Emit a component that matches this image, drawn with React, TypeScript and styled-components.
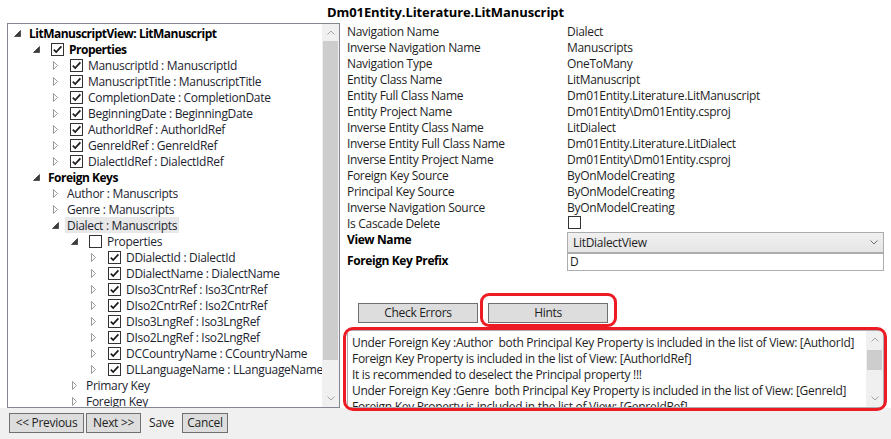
import React from 'react';
import styled, { createGlobalStyle } from 'styled-components';

const FONT = `"Open Sans", "Noto Sans", "Liberation Sans", sans-serif`;

const GlobalStyle = createGlobalStyle`
  html, body { margin: 0; padding: 0; }
  body {
    font-family: ${FONT};
    font-size: 12px;
    letter-spacing: -0.3px;
    color: #1e1e1e;
    background: #f0f0f0;
  }
  * { box-sizing: border-box; }
`;

const Window = styled.div`
  width: 891px;
  height: 439px;
  display: flex;
  flex-direction: column;
`;

const Main = styled.div`
  height: 408px;
  background: #fff;
  display: flex;
  flex-direction: column;
`;

const Title = styled.div`
  height: 23px;
  padding-top: 2px;
  line-height: 21px;
  text-align: center;
  font-weight: 700;
  font-size: 13px;
  letter-spacing: -0.1px;
  color: #000;
`;

const Body = styled.div`
  height: 385px;
  display: flex;
`;

/* ---------- tree ---------- */

const TreeBox = styled.div`
  width: 333px;
  height: 385px;
  margin-left: 7px;
  border: 1px solid #828790;
  display: flex;
  background: #fff;
  flex: none;
`;

const TreeContent = styled.div`
  flex: 1;
  min-width: 0;
  overflow: hidden;
  padding-top: 1px;
`;

const TreeRow = styled.div<{ $level: number }>`
  display: flex;
  align-items: center;
  height: 16px;
  padding-left: ${(p) => p.$level * 19}px;
  white-space: nowrap;
`;

const Expander = styled.span`
  width: 19px;
  height: 16px;
  flex: none;
  display: flex;
  align-items: center;
  justify-content: center;
`;

const Header = styled.span<{ $selected?: boolean; $bold?: boolean }>`
  flex: none;
  display: flex;
  align-items: center;
  height: 16px;
  padding: 0 2px;
  background: ${(p) => (p.$selected ? '#e8e8e8' : 'transparent')};
  font-weight: ${(p) => (p.$bold ? 700 : 400)};
  letter-spacing: ${(p) => (p.$bold ? '-0.5px' : '-0.3px')};
  color: ${(p) => (p.$bold ? '#000' : '#1c2430')};
`;

const CheckBoxBox = styled.span<{ $gapLeft: number }>`
  width: 13px;
  height: 13px;
  flex: none;
  border: 1px solid #333;
  background: #fff;
  margin-left: ${(p) => p.$gapLeft}px;
  margin-right: 5px;
  display: inline-flex;
  align-items: center;
  justify-content: center;
`;

/* ---------- scrollbars ---------- */

const VScroll = styled.div`
  width: 17px;
  flex: none;
  background: #f0f0f0;
  display: flex;
  flex-direction: column;
`;

const ScrollArrow = styled.div`
  height: 17px;
  flex: none;
  display: flex;
  align-items: center;
  justify-content: center;
`;

const ScrollTrack = styled.div`
  flex: 1;
  min-height: 0;
`;

const Thumb = styled.div<{ $offset: number; $size: number }>`
  margin: ${(p) => p.$offset}px 1px 0 1px;
  height: ${(p) => p.$size}px;
  background: #cdcdcd;
`;

/* ---------- right panel ---------- */

const RightPanel = styled.div`
  flex: 1;
  min-width: 0;
  padding: 1px 7px 0 7px;
  display: flex;
  flex-direction: column;
`;

const PropRow = styled.div<{ $height?: number }>`
  display: grid;
  grid-template-columns: 220px 1fr;
  height: ${(p) => p.$height ?? 16}px;
  line-height: 16px;
  white-space: nowrap;
`;

const Label = styled.div<{ $bold?: boolean }>`
  font-weight: ${(p) => (p.$bold ? 700 : 400)};
  letter-spacing: ${(p) => (p.$bold ? '-0.4px' : '-0.3px')};
  color: ${(p) => (p.$bold ? '#000' : '#1e1e1e')};
`;

const Value = styled.div`
  display: flex;
  align-items: flex-start;
`;

const PlainCheck = styled.span`
  width: 13px;
  height: 13px;
  margin-left: 1px;
  border: 1px solid #333;
  background: #fff;
`;

const Combo = styled.div`
  width: 100%;
  height: 21px;
  border: 1px solid #acacac;
  background: linear-gradient(#f0f0f0, #e5e5e5);
  display: flex;
  align-items: center;
  justify-content: space-between;
  padding: 0 5px 0 5px;
  color: #1e1e1e;
`;

const TextInput = styled.div`
  width: 100%;
  height: 18px;
  border: 1px solid #abadb3;
  background: #fff;
  padding-left: 2px;
  line-height: 16px;
`;

const ButtonRow = styled.div`
  display: flex;
  gap: 10px;
  margin-top: 32px;
  padding-left: 11px;
`;

const Button = styled.button<{ $w: number; $flat?: boolean }>`
  width: ${(p) => p.$w}px;
  height: 20px;
  padding: 0;
  font-family: ${FONT};
  font-size: 12px;
  letter-spacing: -0.3px;
  color: #1e1e1e;
  background: ${(p) => (p.$flat ? 'transparent' : '#dddddd')};
  border: 1px solid ${(p) => (p.$flat ? 'transparent' : '#707070')};
  line-height: 16px;
  flex: none;
`;

const Annotated = styled.div<{ $l: number; $r: number; $t: number; $b: number; $radius: number; $mt?: number }>`
  position: relative;
  margin-top: ${(p) => p.$mt ?? 0}px;
  &::after {
    content: '';
    position: absolute;
    left: ${(p) => -p.$l}px;
    right: ${(p) => -p.$r}px;
    top: ${(p) => -p.$t}px;
    bottom: ${(p) => -p.$b}px;
    border: 3px solid #ed1c24;
    border-radius: ${(p) => p.$radius}px;
    pointer-events: none;
  }
`;

const HintsBox = styled.div`
  height: 78px;
  border: 1px solid #abadb3;
  background: #fff;
  display: flex;
`;

const HintsText = styled.div`
  flex: 1;
  min-width: 0;
  overflow: hidden;
  padding: 4px 0 0 4px;
  line-height: 16px;
  white-space: pre;
  color: #1e1e1e;
`;

/* ---------- footer ---------- */

const Footer = styled.div`
  height: 31px;
  background: #f0f0f0;
  display: flex;
  gap: 2px;
  padding: 5px 0 0 9px;
`;

/* ---------- glyphs ---------- */

const ExpandedGlyph = () => (
  <svg width="7" height="7" viewBox="0 0 7 7">
    <polygon points="6.5,0.5 6.5,6.5 0.5,6.5" fill="#3c3c3c" stroke="#3c3c3c" strokeWidth="0.8" />
  </svg>
);

const CollapsedGlyph = () => (
  <svg width="6" height="9" viewBox="0 0 6 9">
    <polygon points="0.5,0.5 0.5,8.5 4.5,4.5" fill="#fff" stroke="#9a9a9a" strokeWidth="1" />
  </svg>
);

const CheckMark = () => (
  <svg width="11" height="11" viewBox="0 0 11 11">
    <polyline points="1.8,5.6 4.2,8 9.4,2.4" fill="none" stroke="#1a1a1a" strokeWidth="1.7" />
  </svg>
);

const Chevron = ({ up, color = '#a6a6a6' }: { up?: boolean; color?: string }) => (
  <svg width="8" height="5" viewBox="0 0 8 5">
    <polyline
      points={up ? '0.5,4.5 4,1 7.5,4.5' : '0.5,0.5 4,4 7.5,0.5'}
      fill="none"
      stroke={color}
      strokeWidth="1"
    />
  </svg>
);

const ScrollBar = ({ offset, size }: { offset: number; size: number }) => (
  <VScroll>
    <ScrollArrow>
      <Chevron up />
    </ScrollArrow>
    <ScrollTrack>
      <Thumb $offset={offset} $size={size} />
    </ScrollTrack>
    <ScrollArrow>
      <Chevron />
    </ScrollArrow>
  </VScroll>
);

/* ---------- data ---------- */

type Node = {
  level: number;
  exp: 'open' | 'closed';
  check?: boolean;
  text: string;
  bold?: boolean;
  selected?: boolean;
};

const nodes: Node[] = [
  { level: 0, exp: 'open', text: 'LitManuscriptView: LitManuscript', bold: true },
  { level: 1, exp: 'open', check: true, text: 'Properties', bold: true },
  { level: 2, exp: 'closed', check: true, text: 'ManuscriptId : ManuscriptId' },
  { level: 2, exp: 'closed', check: true, text: 'ManuscriptTitle : ManuscriptTitle' },
  { level: 2, exp: 'closed', check: true, text: 'CompletionDate : CompletionDate' },
  { level: 2, exp: 'closed', check: true, text: 'BeginningDate : BeginningDate' },
  { level: 2, exp: 'closed', check: true, text: 'AuthorIdRef : AuthorIdRef' },
  { level: 2, exp: 'closed', check: true, text: 'GenreIdRef : GenreIdRef' },
  { level: 2, exp: 'closed', check: true, text: 'DialectIdRef : DialectIdRef' },
  { level: 1, exp: 'open', text: 'Foreign Keys', bold: true },
  { level: 2, exp: 'closed', text: 'Author : Manuscripts' },
  { level: 2, exp: 'closed', text: 'Genre : Manuscripts' },
  { level: 2, exp: 'open', text: 'Dialect : Manuscripts', selected: true },
  { level: 3, exp: 'open', check: false, text: 'Properties' },
  { level: 4, exp: 'closed', check: true, text: 'DDialectId : DialectId' },
  { level: 4, exp: 'closed', check: true, text: 'DDialectName : DialectName' },
  { level: 4, exp: 'closed', check: true, text: 'DIso3CntrRef : Iso3CntrRef' },
  { level: 4, exp: 'closed', check: true, text: 'DIso2CntrRef : Iso2CntrRef' },
  { level: 4, exp: 'closed', check: true, text: 'DIso3LngRef : Iso3LngRef' },
  { level: 4, exp: 'closed', check: true, text: 'DIso2LngRef : Iso2LngRef' },
  { level: 4, exp: 'closed', check: true, text: 'DCCountryName : CCountryName' },
  { level: 4, exp: 'closed', check: true, text: 'DLLanguageName : LLanguageName' },
  { level: 3, exp: 'closed', text: 'Primary Key' },
  { level: 3, exp: 'closed', text: 'Foreign Key' },
];

const props: [string, string][] = [
  ['Navigation Name', 'Dialect'],
  ['Inverse Navigation Name', 'Manuscripts'],
  ['Navigation Type', 'OneToMany'],
  ['Entity Class Name', 'LitManuscript'],
  ['Entity Full Class Name', 'Dm01Entity.Literature.LitManuscript'],
  ['Entity Project Name', 'Dm01Entity\\Dm01Entity.csproj'],
  ['Inverse Entity Class Name', 'LitDialect'],
  ['Inverse Entity Full Class Name', 'Dm01Entity.Literature.LitDialect'],
  ['Inverse Entity Project Name', 'Dm01Entity\\Dm01Entity.csproj'],
  ['Foreign Key Source', 'ByOnModelCreating'],
  ['Principal Key Source', 'ByOnModelCreating'],
  ['Inverse Navigation Source', 'ByOnModelCreating'],
];

const hints = [
  'Under Foreign Key :Author  both Principal Key Property is included in the list of View: [AuthorId]',
  'Foreign Key Property is included in the list of View: [AuthorIdRef]',
  'It is recommended to deselect the Principal property !!!',
  'Under Foreign Key :Genre  both Principal Key Property is included in the list of View: [GenreId]',
  'Foreign Key Property is included in the list of View: [GenreIdRef]',
];

export default function App() {
  return (
    <>
      <GlobalStyle />
      <Window>
        <Main>
          <Title>Dm01Entity.Literature.LitManuscript</Title>
          <Body>
            <TreeBox>
              <TreeContent>
                {nodes.map((n, i) => (
                  <TreeRow key={i} $level={n.level}>
                    <Expander>{n.exp === 'open' ? <ExpandedGlyph /> : <CollapsedGlyph />}</Expander>
                    <Header $selected={n.selected} $bold={n.bold}>
                      {n.check !== undefined && (
                        <CheckBoxBox $gapLeft={3}>{n.check && <CheckMark />}</CheckBoxBox>
                      )}
                      {n.text}
                    </Header>
                  </TreeRow>
                ))}
              </TreeContent>
              <ScrollBar offset={0} size={319} />
            </TreeBox>
            <RightPanel>
              {props.map(([k, v]) => (
                <PropRow key={k}>
                  <Label>{k}</Label>
                  <Value>{v}</Value>
                </PropRow>
              ))}
              <PropRow>
                <Label>Is Cascade Delete</Label>
                <Value>
                  <PlainCheck />
                </Value>
              </PropRow>
              <PropRow $height={21}>
                <Label $bold>View Name</Label>
                <Value>
                  <Combo>
                    <span>LitDialectView</span>
                    <Chevron color="#707070" />
                  </Combo>
                </Value>
              </PropRow>
              <PropRow $height={18}>
                <Label $bold>Foreign Key Prefix</Label>
                <Value>
                  <TextInput>D</TextInput>
                </Value>
              </PropRow>
              <ButtonRow>
                <Button $w={120}>Check Errors</Button>
                <Annotated $l={8} $r={9} $t={10} $b={4} $radius={9}>
                  <Button $w={120}>Hints</Button>
                </Annotated>
              </ButtonRow>
              <Annotated $l={4} $r={3} $t={3} $b={3} $radius={10} $mt={7}>
                <HintsBox>
                  <HintsText>{hints.join('\n')}</HintsText>
                  <ScrollBar offset={2} size={20} />
                </HintsBox>
              </Annotated>
            </RightPanel>
          </Body>
        </Main>
        <Footer>
          <Button $w={75}>{'<< Previous'}</Button>
          <Button $w={55}>{'Next >>'}</Button>
          <Button $w={37} $flat>
            Save
          </Button>
          <Button $w={46}>Cancel</Button>
        </Footer>
      </Window>
    </>
  );
}
